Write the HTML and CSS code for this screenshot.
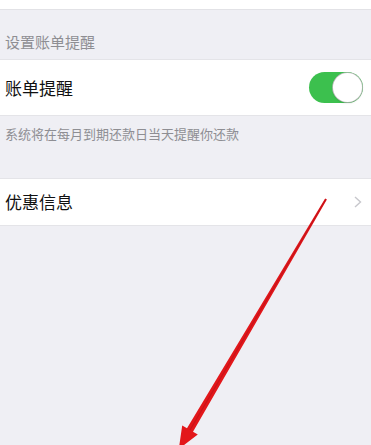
FILE: index.html
```html
<!DOCTYPE html>
<html lang="zh-CN">
<head>
<meta charset="utf-8">
<link rel="stylesheet" href="styles.css">
</head>
<body>
<div class="page">
  <div class="top-strip"></div>
  <div class="section-header">设置账单提醒</div>
  <div class="row row-tall">
    <span class="row-label">账单提醒</span>
    <span class="toggle"><span class="knob"></span></span>
  </div>
  <div class="section-footer">系统将在每月到期还款日当天提醒你还款</div>
  <div class="row row-short">
    <span class="row-label">优惠信息</span>
    <svg class="chevron" width="8" height="12" viewBox="0 0 8 12"><path d="M1 1 L6.5 6 L1 11" fill="none" stroke="#c7c7cc" stroke-width="1.4"/></svg>
  </div>
  <svg class="arrow" width="371" height="445" viewBox="0 0 371 445">
    <polygon points="326.9,199.5 193.0,431.8 197.8,434.6 178.8,449 182.2,425.4 187.0,428.2 325.1,198.5" fill="#e3171a"/>
    <line x1="326" y1="199" x2="190" y2="430" stroke="#b5121a" stroke-width="1.2" opacity="0.6"/>
  </svg>
</div>
</body>
</html>
```
FILE: styles.css
```css
html, body {
  margin: 0;
  padding: 0;
}
body {
  background: #efeff4;
  font-family: "Noto Sans CJK SC", "Noto Sans", sans-serif;
  width: 371px;
  height: 445px;
  overflow: hidden;
}
.page {
  position: relative;
  width: 371px;
  height: 445px;
}
.top-strip {
  height: 9px;
  background: #fff;
  border-bottom: 1px solid #e2e2e6;
}
.section-header {
  height: 49px;
  box-sizing: border-box;
  padding: 22px 0 0 5px;
  font-size: 15px;
  line-height: 20px;
  color: #8e8e93;
}
.row {
  background: #fff;
  display: flex;
  align-items: center;
  justify-content: space-between;
  padding: 0 8px 0 5px;
  border-top: 1px solid #e4e4e8;
  border-bottom: 1px solid #e4e4e8;
}
.row-tall {
  height: 55px;
}
.row-short {
  height: 46px;
  padding-right: 9px;
}
.row-label {
  font-size: 17px;
  color: #111;
  line-height: 22px;
}
.toggle {
  position: relative;
  width: 54px;
  height: 31px;
  border-radius: 16px;
  background: #3cc04e;
  box-sizing: border-box;
}
.knob {
  position: absolute;
  right: 1px;
  top: 1px;
  width: 29px;
  height: 29px;
  border-radius: 50%;
  background: #fff;
  box-shadow: 0 0 0 0.8px #b9b9b9, 0 1px 2px rgba(0,0,0,0.2);
}
.section-footer {
  height: 62px;
  box-sizing: border-box;
  padding: 9px 0 0 5px;
  font-size: 13px;
  line-height: 18px;
  color: #8e8e93;
}
.chevron {
  display: block;
}
.arrow {
  position: absolute;
  left: 0;
  top: 0;
}
```
